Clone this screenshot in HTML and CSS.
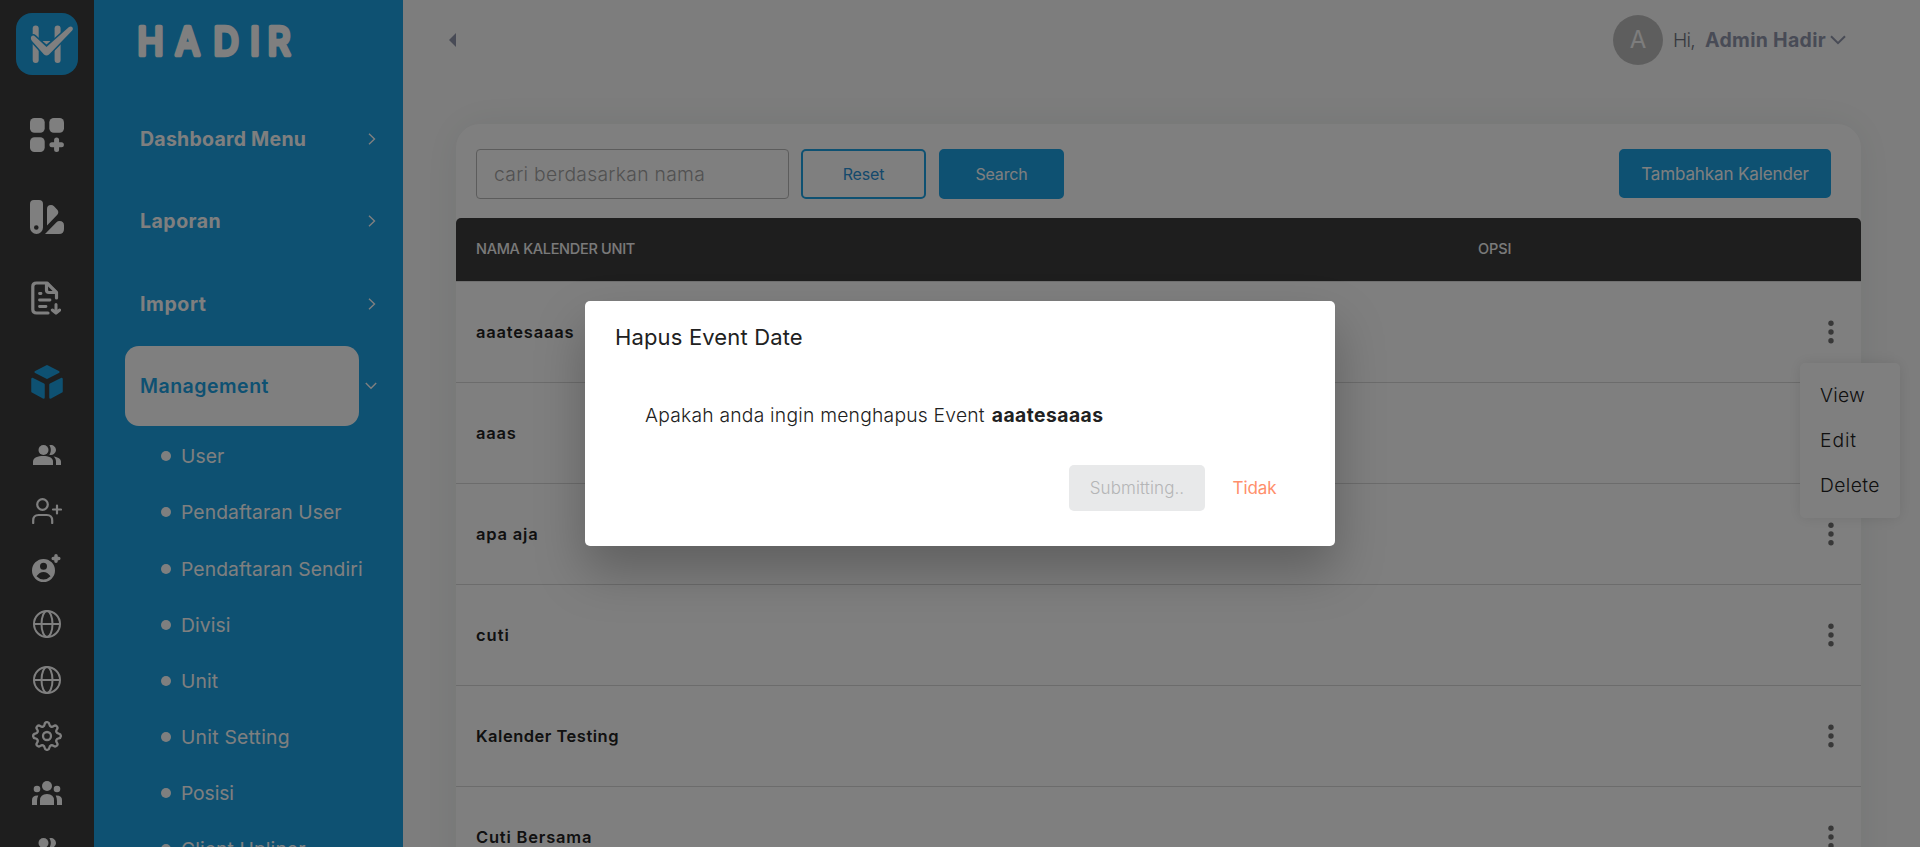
FILE: index.html
```html
<!DOCTYPE html>
<html lang="id">
<head>
<meta charset="utf-8">
<title>Hadir</title>
<link rel="stylesheet" href="styles.css">
</head>
<body>
<svg class="defs" width="0" height="0">
  <symbol id="users" viewBox="0 0 28 20"><circle cx="10.500" cy="5" r="5"/><path d="M0 20v-3.500C0 12.700 5 11 10.200 11S20 12.700 20 16.500V20z"/><path d="M16.300.3a5 5 0 1 1 0 9.400c2-2.600 2-6.800 0-9.400zM20.500 11.500c4.500.7 7.500 2.500 7.500 5.200V20h-5v-3.500c0-2-.8-3.800-2.500-5z"/></symbol>
  <symbol id="globe" viewBox="0 0 28 28"><g fill="none" stroke="currentColor" stroke-width="2"><circle cx="14" cy="14" r="13"/><ellipse cx="14" cy="14" rx="5.500" ry="13"/><path d="M1 14h26"/></g></symbol>
  <symbol id="right" viewBox="0 0 8 12"><path d="M1 .8 6.500 6 1 11.200" fill="none" stroke="currentColor" stroke-width="1.400"/></symbol>
  <symbol id="down" viewBox="0 0 16 10"><path d="M1 1.200 8 8.200l7-7" fill="none" stroke="currentColor" stroke-width="2"/></symbol>
  <symbol id="dots" viewBox="0 0 6 24"><circle cx="3" cy="3.300" r="2.700"/><circle cx="3" cy="12" r="2.700"/><circle cx="3" cy="20.700" r="2.700"/></symbol>
</svg>
<div class="app">
  <nav class="rail">
    <svg class="logo" viewBox="0 0 62 62" width="62" height="62"><rect width="62" height="62" rx="16" fill="#1ca2e4"/><g fill="#fff"><rect x="16.700" y="12.500" width="6" height="37.500" rx="3"/><rect x="38.600" y="12.500" width="6" height="37.500" rx="3"/><path d="M26.500 28h8l-4 3.500z"/><path d="M15.500 23.200q1.700-1.500 3.500.2L30.500 34 53 14q2-1.300 3.400.2 1.200 1.700-.2 3.300L33 41.500q-2.500 2-5 0L16 28q-2-3-.5-4.800z" stroke="#1ca2e4" stroke-width="3" paint-order="stroke"/></g></svg>
    <div class="rail-main">
      <span><svg width="34" height="34" viewBox="0 0 34 34"><rect width="14.700" height="14.700" rx="4.500"/><rect x="19.300" width="14.700" height="14.700" rx="4.500"/><rect y="19.300" width="14.700" height="14.700" rx="4.500"/><path d="M26.600 22v9.500M21.900 26.700h9.500" stroke="currentColor" stroke-width="5" stroke-linecap="round"/></svg></span>
      <span><svg width="34" height="34" viewBox="0 0 34 34"><path fill-rule="evenodd" d="M4 0h5q4 0 4 4v23.500a6.500 6.500 0 0 1-13 0V4q0-4 4-4zM6.300 25.200a2.300 2.300 0 1 0 0 4.600 2.300 2.300 0 0 0 0-4.600z"/><path d="M17 9q0-4 4-4 1.800 0 3 1.300l3.300 3.400q2 2.300 0 5L17 25.500z"/><path d="M15 34 26.500 22.300q1.200-1.300 3-1.300Q34 21 34 25.500V29q0 5-5 5z"/></svg></span>
      <span><svg class="file" width="30" height="34" viewBox="0 0 30 34" fill="none" stroke="currentColor" stroke-width="3.200" stroke-linecap="round" stroke-linejoin="round"><path d="M17 32H5.500Q1.800 32 1.800 28.500V5.500Q1.800 2 5.500 2H16l9.500 9.500V17"/><path d="M15.500 3v6q0 2.500 2.500 2.500h6.500" /><path d="M8.500 12.500h1.500M8.500 19h10.500M8.500 25.500h6.500" stroke-width="2.800"/><path d="M25 23.500V31M21.300 29l3.700 3.200 3.700-3.200" stroke-width="3"/></svg></span>
      <span class="on"><svg width="32" height="34" viewBox="0 0 32 34" stroke="currentColor" stroke-width="2.500" stroke-linejoin="round"><path d="M16 1.300 27.300 7 16 12.700 4.700 7zM1.500 14 12.500 19.500V32.500L1.500 26.500zM30.500 14 19.500 19.500V32.500L30.500 26.500z"/></svg></span>
    </div>
    <div class="rail-sub">
      <span><svg width="28" height="20"><use href="#users"/></svg></span>
      <span><svg width="30" height="26" viewBox="0 0 30 26" fill="none" stroke="currentColor" stroke-width="2.200" stroke-linecap="round"><circle cx="10.500" cy="6.500" r="5.300"/><path d="M1.200 25v-2.500q0-5.500 5.500-5.500h8q5.500 0 5.500 5.500V25M21 11.500h8M25 7.500v8"/></svg></span>
      <span><svg width="30" height="30" viewBox="0 0 30 30"><path fill-rule="evenodd" d="M11.500 6a11.500 11.500 0 1 0 0 23 11.500 11.500 0 0 0 0-23zm0 3.700a3.500 3.500 0 1 1 0 7 3.500 3.500 0 0 1 0-7zM4.500 23.300q3-4.300 7-4.300t7 4.300q-3 3.200-7 3.200t-7-3.200z"/><path d="M24 2.700v5.600M21.200 5.500h5.600" stroke="currentColor" stroke-width="3.500" stroke-linecap="round"/></svg></span>
      <span><svg width="28" height="28"><use href="#globe"/></svg></span>
      <span><svg width="28" height="28"><use href="#globe"/></svg></span>
      <span><svg width="30" height="30" viewBox="0 0 30 30" fill="none" stroke="currentColor" stroke-width="2.300" stroke-linejoin="round"><circle cx="15" cy="15" r="4"/><path d="M12.600 3.300C13 .4 17 .4 17.400 3.300 17.700 5.600 19.800 6.500 21.600 5.100 23.900 3.300 26.700 6.100 24.900 8.400 23.500 10.200 24.400 12.300 26.700 12.600 29.600 13 29.600 17 26.700 17.400 24.400 17.700 23.500 19.800 24.900 21.600 26.700 23.900 23.900 26.700 21.600 24.900 19.800 23.500 17.700 24.400 17.400 26.700 17 29.600 13 29.600 12.600 26.700 12.300 24.400 10.200 23.500 8.400 24.900 6.100 26.700 3.300 23.900 5.100 21.600 6.500 19.800 5.600 17.700 3.300 17.400.4 17 .4 13 3.300 12.600 5.600 12.300 6.500 10.200 5.100 8.400 3.300 6.100 6.100 3.300 8.400 5.100 10.200 6.500 12.300 5.600 12.600 3.300z"/></svg></span>
      <span class="team"><svg width="30" height="24" viewBox="0 0 30 24"><circle cx="15" cy="5" r="5"/><circle cx="5" cy="8" r="3.300"/><circle cx="25" cy="8" r="3.300"/><path d="M8 24v-4.500Q8 13 15 13t7 6.500V24zM0 24v-5q0-4.500 5.500-4.500h.8Q5 17 5 20v4zM30 24v-5q0-4.500-5.500-4.500h-.8Q25 17 25 20v4z"/></svg></span>
      <span><svg width="28" height="20"><use href="#users"/></svg></span>
    </div>
  </nav>
  <aside class="menu">
    <svg class="brand" width="309" height="98" viewBox="0 0 309 98"><text transform="scale(.92 1)" x="61.400 101.600 143.500 175 201" y="55">HADIR</text></svg>
    <ul class="groups">
      <li><b class="l1">Dashboard Menu</b><svg width="8" height="12"><use href="#right"/></svg></li>
      <li><b class="l2">Laporan</b><svg width="8" height="12"><use href="#right"/></svg></li>
      <li><b class="l3">Import</b><svg width="8" height="12"><use href="#right"/></svg></li>
      <li class="active"><b>Management</b><svg width="12" height="8" viewBox="0 0 12 8"><path d="M.8 1 6 6.300 11.200 1" fill="none" stroke="currentColor" stroke-width="1.400"/></svg></li>
    </ul>
    <ul class="subs">
      <li>User</li><li>Pendaftaran User</li><li>Pendaftaran Sendiri</li><li>Divisi</li><li>Unit</li><li class="wide">Unit Setting</li><li class="tight">Posisi</li><li>Client Upliner</li>
    </ul>
  </aside>
  <main class="main">
    <header class="top">
      <svg width="7" height="14" viewBox="0 0 7 14"><path d="M7 0v14L0 7z"/></svg>
      <div class="account"><span class="avatar">A</span><span class="hi">Hi,</span><b>Admin Hadir</b><svg width="16" height="10"><use href="#down"/></svg></div>
    </header>
    <section class="card">
      <div class="tools">
        <input class="search" placeholder="cari berdasarkan nama">
        <button class="btn outline">Reset</button>
        <button class="btn">Search</button>
        <button class="btn add">Tambahkan Kalender</button>
      </div>
      <div class="thead"><span>NAMA KALENDER UNIT</span><span class="opsi">OPSI</span></div>
      <div class="row"><span class="wide">aaatesaaas</span><svg width="6" height="24"><use href="#dots"/></svg></div>
      <div class="row"><span class="wide">aaas</span><svg width="6" height="24"><use href="#dots"/></svg></div>
      <div class="row"><span class="wide">apa aja</span><svg width="6" height="24"><use href="#dots"/></svg></div>
      <div class="row"><span class="cuti">cuti</span><svg width="6" height="24"><use href="#dots"/></svg></div>
      <div class="row"><span>Kalender Testing</span><svg width="6" height="24"><use href="#dots"/></svg></div>
      <div class="row"><span class="wide">Cuti Bersama</span><svg width="6" height="24"><use href="#dots"/></svg></div>
    </section>
  </main>
</div>
<div class="popup"><a>View</a><a class="edit">Edit</a><a class="del">Delete</a></div>
<div class="overlay">
  <div class="dialog">
    <h2>Hapus Event Date</h2>
    <p><span>Apakah anda ingin menghapus Event</span><b>aaatesaaas</b></p>
    <div class="actions"><button class="submit" disabled>Submitting..</button><button class="cancel">Tidak</button></div>
  </div>
</div>
</body>
</html>
```

FILE: styles.css
```css
* { box-sizing: border-box; }
body { margin: 0; height: 847px; overflow: hidden; font-family: Inter, sans-serif; background: #fbfbfb; }
.defs { position: absolute; }
ul { list-style: none; margin: 0; padding: 0; }
svg { display: block; fill: currentColor; flex: none; }
svg[fill="none"] { fill: none; }
button, input { font-family: inherit; }
.app { display: flex; height: 847px; overflow: hidden; }

.rail { width: 94px; flex: none; background: #3c3c3c; color: #fff; display: flex; flex-direction: column; align-items: center; padding-top: 13px; }
.rail-main { padding-top: 19px; display: grid; grid-auto-rows: 82.300px; }
.rail-main span, .rail-sub span { display: flex; align-items: center; justify-content: center; }
.rail .on { color: #1ca2e4; }
.rail .file { margin: 0 3px 3px 0; }
.rail-sub { padding-top: 4px; display: grid; grid-auto-rows: 56.150px; }
.rail-sub .team { padding-top: 2px; }

.menu { width: 309px; flex: none; background: #1ca2e4; color: #fff; overflow: hidden; }
.brand { font-size: 38px; font-weight: 400; text-anchor: middle; stroke: #fff; stroke-width: 4.600px; stroke-linejoin: round; }
.groups { padding-left: 31px; }
.groups li { height: 82.300px; display: flex; align-items: center; }
.groups b { width: 234px; height: 80px; padding-left: 15px; line-height: 80px; font-size: 19.500px; font-weight: 700; border-radius: 14px; }
.groups svg { margin-left: 9px; }
.l1 { letter-spacing: .25px; }
.l2 { letter-spacing: .5px; }
.l3 { letter-spacing: .6px; }
.groups .active b { background: #fff; color: #1ca2e4; font-weight: 600; letter-spacing: .5px; }
.groups .active svg { margin-left: 6px; }
.subs { padding: 1px 0 0 67px; }
.subs li { height: 56.150px; display: flex; align-items: center; gap: 10px; font-size: 19.300px; letter-spacing: .1px; white-space: nowrap; }
.subs li::before { content: ""; width: 10px; height: 10px; border-radius: 50%; background: #fff; }
.subs .wide { letter-spacing: .25px; }
.subs .tight { letter-spacing: -.1px; }

.main { flex: 1; padding: 0 59px 0 53px; }
.top { height: 80px; margin: 0 15px 44px -7px; display: flex; align-items: center; justify-content: space-between; color: #9197ac; }
.account { display: flex; align-items: center; }
.avatar { width: 50px; height: 50px; border-radius: 50%; background: #bdbdbd; color: #fafafa; font-size: 24px; line-height: 50px; text-align: center; margin-right: 10px; }
.hi { font-size: 19.300px; font-weight: 300; color: #70737f; letter-spacing: -.8px; width: 32px; }
.account b { font-size: 19.500px; letter-spacing: .3px; margin-right: 4px; }

.card { background: #fff; border-radius: 24px 24px 0 0; box-shadow: 0 0 40px rgba(25, 60, 45, .08); height: 760px; }
.tools { display: flex; align-items: flex-start; padding: 25px 30px 0 20px; height: 94px; }
.search { width: 313px; height: 50px; border: 1px solid #b9b9b9; border-radius: 4px; padding: 0 17px; font-size: 19.300px; font-weight: 300; letter-spacing: .3px; background: #fff; margin-right: 12px; }
.search::placeholder { color: #a3a3a3; }
.btn { width: 125px; height: 50px; padding: 0; border: 2px solid #1ca2e4; border-radius: 5px; background: #1ca2e4; color: #fff; font-size: 16px; letter-spacing: -.15px; margin-right: 13px; }
.outline { background: #fff; color: #2a93d8; }
.add { width: 212px; height: 49px; margin: 0 0 0 auto; font-size: 17px; letter-spacing: -.12px; }
.thead { height: 64px; background: #3c3c3c; border-radius: 5px 5px 0 0; border-bottom: 1px solid #e0e0e0; background-clip: padding-box; color: #f4f4f4; display: grid; grid-template-columns: 1002px 1fr; align-items: center; padding: 0 0 2px 20px; font-size: 14.500px; font-weight: 500; letter-spacing: -.3px; }
.opsi { letter-spacing: -.1px; }
.row { height: 101px; padding: 0 27px 0 20px; border-bottom: 1px solid #d8d8d8; display: flex; align-items: center; justify-content: space-between; font-size: 16.500px; font-weight: 600; letter-spacing: .5px; color: #222; }
.row .wide { letter-spacing: .8px; }
.row .cuti { letter-spacing: 1px; }
.row svg { color: #707070; }

.popup { position: absolute; left: 1800px; top: 363px; width: 100px; height: 155px; padding: 10px 20px; background: #fff; border-radius: 5px; box-shadow: 0 0 14px rgba(0, 0, 0, .1); font-size: 19.300px; font-weight: 300; color: #212121; }
.popup a { display: block; line-height: 45px; letter-spacing: .2px; }
.popup .edit { letter-spacing: .9px; }
.popup .del { letter-spacing: .4px; }

.overlay { position: absolute; inset: 0; background: rgba(0, 0, 0, .5); display: flex; align-items: center; justify-content: center; }
.dialog { width: 750px; height: 245px; background: #fff; border-radius: 5px; padding: 16px 30px 0; color: #212121; box-shadow: 0 25px 50px rgba(0, 0, 0, .25); }
.dialog h2 { margin: 0; font-size: 22px; line-height: 40px; font-weight: 400; letter-spacing: .15px; }
.dialog p { margin: 43px 0 0 30px; font-size: 19.300px; line-height: 30px; font-weight: 300; letter-spacing: .22px; display: flex; gap: 7px; }
.dialog p b { font-weight: 700; letter-spacing: .45px; }
.actions { display: flex; justify-content: flex-end; padding: 35px 9px 0 0; }
.actions button { height: 46px; border: 0; border-radius: 5px; padding: 0; font-size: 17px; background: none; }
.actions .submit { width: 136px; background: #e8e9ea; color: #b4b5b6; font-weight: 300; letter-spacing: .1px; }
.actions .cancel { width: 91px; margin: 0 -4px 0 4px; color: #ff8f6b; letter-spacing: -.1px; }
```
